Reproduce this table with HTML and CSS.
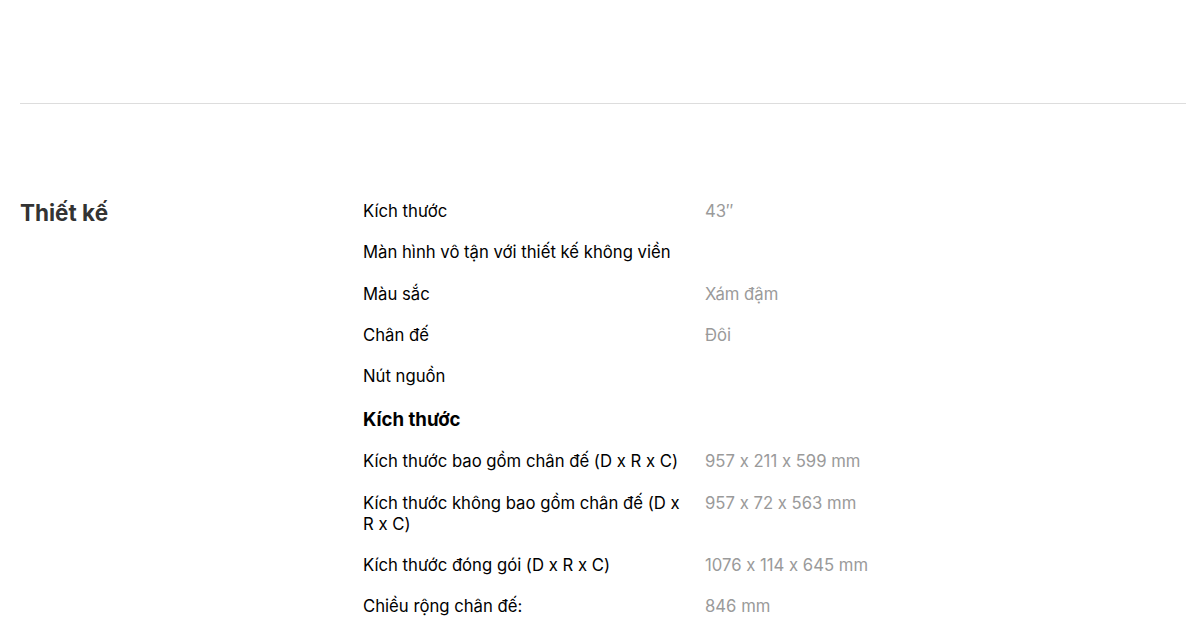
FILE: index.html
```html
<!DOCTYPE html>
<html lang="vi">

<head>
  <meta charset="UTF-8">
  <meta name="viewport" content="width=device-width, initial-scale=1.0">
  <title>Thông số kỹ thuật</title>
  <link rel="stylesheet" href="styles.css">
</head>

<body>
  <div class="page">
    <hr class="divider">

    <section class="spec-section">
      <h2 class="spec-title">Thiết kế</h2>

      <div class="spec-list">
        <div class="spec-row">
          <div class="spec-label">Kích thước</div>
          <div class="spec-value">43″</div>
        </div>
        <div class="spec-row">
          <div class="spec-label wide">Màn hình vô tận với thiết kế không viền</div>
          <div class="spec-value"></div>
        </div>
        <div class="spec-row">
          <div class="spec-label">Màu sắc</div>
          <div class="spec-value">Xám đậm</div>
        </div>
        <div class="spec-row">
          <div class="spec-label">Chân đế</div>
          <div class="spec-value">Đôi</div>
        </div>
        <div class="spec-row">
          <div class="spec-label">Nút nguồn</div>
          <div class="spec-value"></div>
        </div>

        <h3 class="spec-group">Kích thước</h3>

        <div class="spec-row">
          <div class="spec-label">Kích thước bao gồm chân đế (D x R x C)</div>
          <div class="spec-value">957 x 211 x 599 mm</div>
        </div>
        <div class="spec-row">
          <div class="spec-label">Kích thước không bao gồm chân đế (D x R x C)</div>
          <div class="spec-value">957 x 72 x 563 mm</div>
        </div>
        <div class="spec-row">
          <div class="spec-label">Kích thước đóng gói (D x R x C)</div>
          <div class="spec-value">1076 x 114 x 645 mm</div>
        </div>
        <div class="spec-row">
          <div class="spec-label">Chiều rộng chân đế:</div>
          <div class="spec-value">846 mm</div>
        </div>
      </div>
    </section>
  </div>
</body>

</html>
```

FILE: styles.css
```css
body {
  margin: 0;
  font-family: Inter, 'Noto Sans', sans-serif;
  font-feature-settings: "calt" 0;
  background-color: #fff;
  color: #000;
}

.page {
  padding: 0 14px 0 20px;
}

.divider {
  margin: 103px 0 0;
  border: none;
  border-top: 1px solid #ddd;
}

.spec-section {
  display: grid;
  grid-template-columns: 343px 1fr;
  padding-top: 87px;
}

.spec-title {
  margin: 0;
  padding-top: 8px;
  font-size: 22.5px;
  line-height: 28px;
  font-weight: 700;
  color: #333;
}

.spec-row {
  display: grid;
  grid-template-columns: 326px 1fr;
  column-gap: 16px;
  padding: 10px 0 10.35px;
  font-size: 16.7px;
  line-height: 21px;
}

.spec-label.wide {
  white-space: nowrap;
}

.spec-value {
  color: #9a9a9a;
}

.spec-group {
  margin: 0;
  padding: 10.5px 0 11px;
  font-size: 18.6px;
  line-height: 22px;
  font-weight: 700;
}
```
